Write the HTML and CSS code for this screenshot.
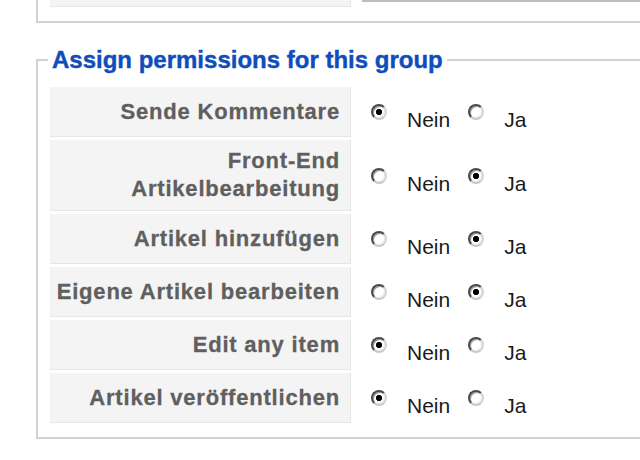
FILE: index.html
```html
<!DOCTYPE html>
<html lang="de">
<head>
<meta charset="utf-8">
<title>Gruppenrechte</title>
<link rel="stylesheet" href="styles.css">
</head>
<body>
<div class="page">
  <div class="prev">
    <div class="prev-row">
      <div class="prev-key"></div>
      <div class="prev-input"></div>
    </div>
  </div>

  <fieldset class="perm">
    <legend>Assign permissions for this group</legend>
    <div class="rows">
      <div class="key">Sende Kommentare</div>
      <div class="opts">
        <label class="opt"><input type="radio" name="p1" checked><span>Nein</span></label>
        <label class="opt"><input type="radio" name="p1"><span>Ja</span></label>
      </div>

      <div class="key">Front-End<br>Artikelbearbeitung</div>
      <div class="opts">
        <label class="opt"><input type="radio" name="p2"><span>Nein</span></label>
        <label class="opt"><input type="radio" name="p2" checked><span>Ja</span></label>
      </div>

      <div class="key">Artikel hinzufügen</div>
      <div class="opts">
        <label class="opt"><input type="radio" name="p3"><span>Nein</span></label>
        <label class="opt"><input type="radio" name="p3" checked><span>Ja</span></label>
      </div>

      <div class="key">Eigene Artikel bearbeiten</div>
      <div class="opts">
        <label class="opt"><input type="radio" name="p4"><span>Nein</span></label>
        <label class="opt"><input type="radio" name="p4" checked><span>Ja</span></label>
      </div>

      <div class="key">Edit any item</div>
      <div class="opts">
        <label class="opt"><input type="radio" name="p5" checked><span>Nein</span></label>
        <label class="opt"><input type="radio" name="p5"><span>Ja</span></label>
      </div>

      <div class="key">Artikel veröffentlichen</div>
      <div class="opts">
        <label class="opt"><input type="radio" name="p6" checked><span>Nein</span></label>
        <label class="opt"><input type="radio" name="p6"><span>Ja</span></label>
      </div>
    </div>
  </fieldset>
</div>
</body>
</html>
```

FILE: styles.css
```css
html, body {
  margin: 0;
  padding: 0;
  background: #fff;
  overflow: hidden;
}

body {
  font-family: "Liberation Sans", Arial, sans-serif;
  width: 640px;
  height: 460px;
}

.page {
  padding-left: 36px;
}

.prev {
  width: 700px;
  height: 21px;
  border: 2px solid #d2d2d2;
  border-top: none;
  padding-left: 12px;
}

.prev-row {
  display: flex;
  align-items: flex-start;
}

.prev-key {
  width: 300px;
  height: 6px;
  background: #f4f4f4;
  border-right: 1px solid #e6e6e6;
  border-bottom: 1px solid #e6e6e6;
}

.prev-input {
  margin-left: 11px;
  flex: 1;
  height: 2px;
  background: #bdbdbd;
}

.perm {
  width: 700px;
  margin: 23px 0 0 0;
  border: 2px solid #d2d2d2;
  padding: 13px 0 14px 12px;
  min-width: 0;
}

.perm legend {
  margin-left: -2px;
  padding: 0 4px;
  font-size: 24px;
  line-height: 28px;
  font-weight: bold;
  color: #0f4dbd;
  -webkit-text-stroke: 0.4px #0f4dbd;
}

.rows {
  display: grid;
  grid-template-columns: 301px auto;
  row-gap: 3px;
  justify-content: start;
}

.key {
  box-sizing: border-box;
  min-height: 50px;
  padding: 7px 10px 7px 4px;
  display: flex;
  align-items: center;
  justify-content: flex-end;
  text-align: right;
  background: #f4f4f4;
  border-right: 1px solid #e6e6e6;
  border-bottom: 1px solid #e6e6e6;
  color: #5f5f5f;
  font-size: 22px;
  line-height: 28px;
  letter-spacing: 0.8px;
  font-weight: bold;
  -webkit-text-stroke: 0.3px #5f5f5f;
}

.opts {
  display: flex;
  align-items: center;
  padding-left: 20px;
}

.opt {
  display: flex;
  align-items: center;
  gap: 20px;
  margin-right: 18px;
  font-size: 21px;
  color: #1a1a1a;
}

.opt span {
  padding-top: 16px;
  line-height: 22px;
}

.opt input {
  appearance: none;
  -webkit-appearance: none;
  box-sizing: border-box;
  flex: 0 0 16px;
  width: 16px;
  height: 16px;
  margin: 0;
  border-radius: 50%;
  border: 2px solid;
  border-color: #4a4a4a #d4d4d4 #c8c8c8 #4a4a4a;
  box-shadow: inset 1px 1px 0 #9a9a9a, inset -1px -1px 0 #ececec;
  background: #fff;
}

.opt input:checked {
  background: radial-gradient(circle, #000 0 2.8px, #fff 3.4px);
}
```
